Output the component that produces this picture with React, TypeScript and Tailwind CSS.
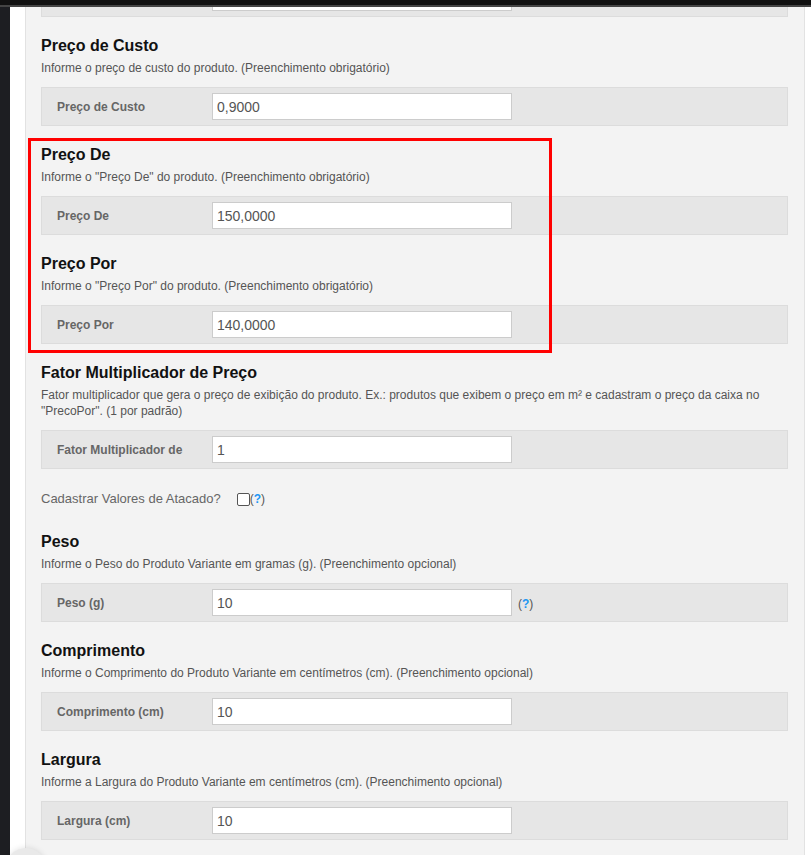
import React from 'react';

type Field = {
  title?: string;
  help?: React.ReactNode;
  label: string;
  value: string;
  hint?: boolean;
};

function Hint() {
  return (
    <span className="text-[12px] text-[#555]">
      (<span className="font-bold text-[#2196f3]">?</span>)
    </span>
  );
}

function FieldRow({ label, value, hint }: { label: string; value: string; hint?: boolean }) {
  return (
    <div className="flex h-[39px] items-center border border-[#dcdcdc] bg-[#e6e6e6] pl-[15px]">
      <div className="w-[155px] text-[12px] font-bold text-[#666]">{label}</div>
      <input
        defaultValue={value}
        readOnly
        className="h-[27px] w-[300px] border border-[#cccccc] bg-white px-[4px] text-[14px] text-[#555] outline-none"
      />
      {hint && (
        <div className="ml-[6px]">
          <Hint />
        </div>
      )}
    </div>
  );
}

function Section({ title, help, label, value, hint, first }: Field & { first?: boolean }) {
  return (
    <section className={first ? 'mt-[25px]' : 'mt-[19px]'}>
      <h2 className="text-[16px] font-bold leading-[20px] text-[#111]">{title}</h2>
      <p className="mt-[4px] text-[12px] leading-[16px] text-[#555]">{help}</p>
      <div className="mt-[11px]">
        <FieldRow label={label} value={value} hint={hint} />
      </div>
    </section>
  );
}

const top: Field[] = [
  {
    title: 'Preço de Custo',
    help: 'Informe o preço de custo do produto. (Preenchimento obrigatório)',
    label: 'Preço de Custo',
    value: '0,9000',
  },
  {
    title: 'Preço De',
    help: 'Informe o "Preço De" do produto. (Preenchimento obrigatório)',
    label: 'Preço De',
    value: '150,0000',
  },
  {
    title: 'Preço Por',
    help: 'Informe o "Preço Por" do produto. (Preenchimento obrigatório)',
    label: 'Preço Por',
    value: '140,0000',
  },
  {
    title: 'Fator Multiplicador de Preço',
    help: 'Fator multiplicador que gera o preço de exibição do produto. Ex.: produtos que exibem o preço em m² e cadastram o preço da caixa no "PrecoPor". (1 por padrão)',
    label: 'Fator Multiplicador de',
    value: '1',
  },
];

const bottom: Field[] = [
  {
    title: 'Peso',
    help: 'Informe o Peso do Produto Variante em gramas (g). (Preenchimento opcional)',
    label: 'Peso (g)',
    value: '10',
    hint: true,
  },
  {
    title: 'Comprimento',
    help: 'Informe o Comprimento do Produto Variante em centímetros (cm). (Preenchimento opcional)',
    label: 'Comprimento (cm)',
    value: '10',
  },
  {
    title: 'Largura',
    help: 'Informe a Largura do Produto Variante em centímetros (cm). (Preenchimento opcional)',
    label: 'Largura (cm)',
    value: '10',
  },
];

export default function App() {
  return (
    <div className="relative h-[855px] w-[811px] overflow-hidden bg-white font-['Liberation_Sans',Arial,sans-serif]">
      {/* window top edge */}
      <div className="h-[5px] bg-[#111111]" />
      <div className="h-[2px] bg-[#444444]" />

      <div className="flex h-[848px]">
        <div className="w-[10px] bg-[#1d1e22]" />
        <div className="w-[15px] bg-white" />

        <div className="flex-1 overflow-hidden border-x border-[#e2e2e2] bg-[#f3f3f3] pl-[15px] pr-[16px]">
          {/* row of the previous section, scrolled mostly out of view */}
          <div className="-mt-[29px]">
            <FieldRow label="" value="" />
          </div>

          {top.map((f) => (
            <Section key={f.label} {...f} />
          ))}

          <div className="mt-[22px] flex h-[16px] items-center">
            <span className="text-[13px] text-[#666]">Cadastrar Valores de Atacado?</span>
            <span className="ml-[16px] h-[13px] w-[13px] rounded-[2px] border border-[#555] bg-white" />
            <Hint />
          </div>

          {bottom.map((f, i) => (
            <Section key={f.label} {...f} first={i === 0} />
          ))}
        </div>

        <div className="w-[6px] bg-white" />
      </div>

      {/* highlight drawn over the form */}
      <div className="pointer-events-none absolute left-[28px] top-[138px] h-[215px] w-[524px] border-[3px] border-[#ff0000]" />

      {/* floating button peeking at the bottom */}
      <div className="pointer-events-none absolute left-[6px] top-[848px] h-[40px] w-[40px] rounded-full bg-[#e9e9e9] shadow-[0_0_6px_rgba(0,0,0,0.12)]" />
    </div>
  );
}
